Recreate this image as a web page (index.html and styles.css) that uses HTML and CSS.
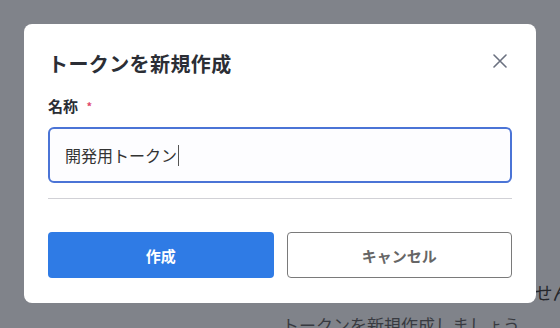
FILE: index.html
```html
<!DOCTYPE html>
<html lang="ja">
<head>
  <meta charset="UTF-8">
  <title>トークンを新規作成</title>
  <link rel="stylesheet" href="styles.css">
</head>
<body>
  <div class="page">
    <p class="empty-title">まだトークンがありません</p>
    <p class="empty-sub">トークンを新規作成しましょう</p>
  </div>

  <div class="overlay">
    <div class="modal">
      <div class="modal-header">
        <h2>トークンを新規作成</h2>
        <button class="close-button" aria-label="閉じる">
          <svg width="14" height="14" viewBox="0 0 14 14">
            <path d="M1 1 L13 13 M13 1 L1 13" stroke="#6b7180" stroke-width="1.6" stroke-linecap="round" fill="none"/>
          </svg>
        </button>
      </div>

      <label class="field-label">名称 <span class="required">*</span></label>
      <div class="text-field">開発用トークン<span class="caret"></span></div>

      <hr class="divider">

      <div class="actions">
        <button class="btn btn-primary">作成</button>
        <button class="btn btn-secondary">キャンセル</button>
      </div>
    </div>
  </div>
</body>
</html>
```

FILE: styles.css
```css
body {
  margin: 0;
  font-family: "Noto Sans CJK JP", "Noto Sans", sans-serif;
  background: #80838a;
  width: 560px;
  height: 328px;
  overflow: hidden;
}
.page {
  padding-top: 278px;
  padding-left: 282px;
}
.page p {
  margin: 0;
  white-space: nowrap;
}
.empty-title {
  font-size: 18px;
  line-height: 28px;
  color: #25272c;
  padding-left: 73px;
}
.empty-sub {
  font-size: 17px;
  line-height: 28px;
  margin-top: 5px !important;
  color: #383a40;
}
.overlay {
  position: absolute;
  top: 0;
  left: 0;
  width: 560px;
  height: 328px;
}
.modal {
  position: absolute;
  top: 24px;
  left: 24px;
  width: 464px;
  padding: 24px 24px 25px;
  background: #fff;
  border-radius: 8px;
}
.modal-header {
  display: flex;
  justify-content: space-between;
  align-items: flex-start;
  height: 32px;
}
.modal-header h2 {
  margin: 0;
  font-size: 20px;
  line-height: 32px;
  font-weight: 700;
  letter-spacing: 0.4px;
  color: #2b2e35;
}
.close-button {
  width: 26px;
  height: 26px;
  margin-right: -1px;
  padding: 0;
  border: none;
  background: none;
  display: flex;
  align-items: center;
  justify-content: center;
  cursor: pointer;
}
.field-label {
  display: block;
  margin-top: 16px;
  font-size: 15px;
  line-height: 20px;
  font-weight: 700;
  color: #2b2e35;
}
.required {
  color: #e0476a;
  font-size: 11px;
  vertical-align: top;
  margin-left: 5px;
}
.text-field {
  margin-top: 11px;
  height: 52px;
  border: 2px solid #4b74d6;
  border-radius: 6px;
  padding: 0 15px;
  display: flex;
  align-items: center;
  font-size: 16px;
  color: #333;
  background: #fdfdff;
}
.caret {
  display: inline-block;
  width: 1px;
  height: 21px;
  background: #555;
  margin-left: 1px;
}
.divider {
  margin: 15px 0 0;
  border: none;
  border-top: 1px solid #d1d1d6;
}
.actions {
  margin-top: 33px;
  display: grid;
  grid-template-columns: 1fr 1fr;
  gap: 13px;
}
.btn {
  height: 46px;
  border-radius: 4px;
  font-family: inherit;
  font-size: 15px;
  font-weight: 700;
  cursor: pointer;
}
.btn-primary {
  background: #2f7be5;
  color: #fff;
  border: none;
}
.btn-secondary {
  background: #fff;
  color: #666;
  border: 1px solid #7a7a7a;
}
```
